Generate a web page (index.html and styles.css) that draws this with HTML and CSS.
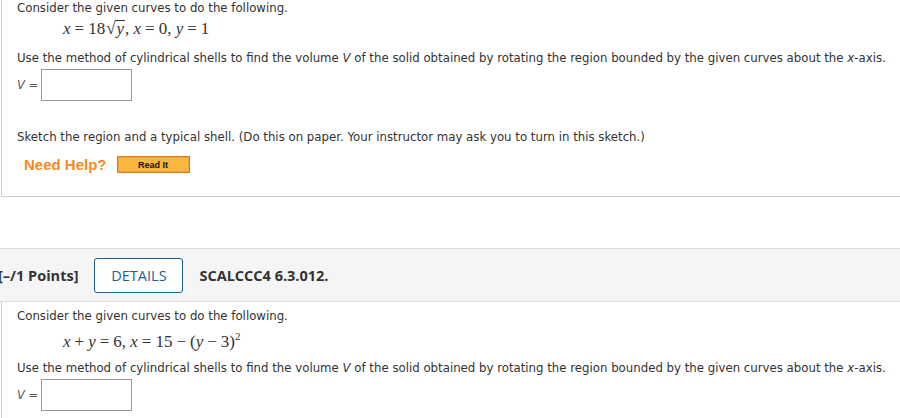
FILE: index.html
```html
<!DOCTYPE html>
<html>
<head>
<meta charset="utf-8">
<link rel="stylesheet" href="styles.css">
</head>
<body>
<div class="panel panel-top">
  <p class="line first">Consider the given curves to do the following.</p>
  <p class="math m1"><i>x</i><span class="op">=</span>18<span class="sqrt"><span class="rad">√</span><span class="under"><i>y</i></span></span>, <i>x</i><span class="op">=</span>0, <i>y</i><span class="op">=</span>1</p>
  <p class="line">Use the method of cylindrical shells to find the volume <i>V</i> of the solid obtained by rotating the region bounded by the given curves about the <i>x</i>-axis.</p>
  <div class="answer"><span class="vlabel"><i>V</i> =</span><span class="input"></span></div>
  <p class="line sketch">Sketch the region and a typical shell. (Do this on paper. Your instructor may ask you to turn in this sketch.)</p>
  <div class="help"><span class="need">Need Help?</span><span class="readit">Read It</span></div>
</div>
<div class="qhead">
  <span class="points">[–/1 Points]</span>
  <span class="details">DETAILS</span>
  <span class="code">SCALCCC4 6.3.012.</span>
</div>
<div class="panel panel-bottom">
  <p class="line first">Consider the given curves to do the following.</p>
  <p class="math m2"><i>x</i><span class="op">+</span><i>y</i><span class="op">=</span>6, <i>x</i><span class="op">=</span>15<span class="op">−</span>(<i>y</i><span class="op">−</span>3)<sup>2</sup></p>
  <p class="line">Use the method of cylindrical shells to find the volume <i>V</i> of the solid obtained by rotating the region bounded by the given curves about the <i>x</i>-axis.</p>
  <div class="answer"><span class="vlabel"><i>V</i> =</span><span class="input"></span></div>
</div>
</body>
</html>
```
FILE: styles.css
```css
html, body {
  margin: 0;
  padding: 0;
  background: #fff;
}
body {
  width: 900px;
  height: 418px;
  overflow: hidden;
  font-family: "DejaVu Sans", Verdana, sans-serif;
  font-size: 11.75px;
  color: #333;
}
p { margin: 0; }
.panel {
  margin-left: 1px;
  border-left: 1px solid #ccc;
  padding-left: 15px;
}
.panel-top {
  border-bottom: 1px solid #ccc;
  padding-bottom: 23px;
}
.line {
  line-height: 16px;
  white-space: nowrap;
}
.line i { font-style: italic; }
.math {
  font-family: "Liberation Serif", "Times New Roman", serif;
  font-size: 17px;
  color: #333;
  padding-left: 46px;
  line-height: 20px;
  white-space: nowrap;
}
.op { padding: 0 4px; }
.m1 { margin-top: 3px; margin-bottom: 11px; }
.m2 { margin-top: 8px; margin-bottom: 8px; }
.math i { font-style: italic; }
.math sup { font-size: 11px; vertical-align: 7px; line-height: 0; }
.sqrt { display: inline-block; margin-left: 1px; }
.rad { font-style: normal; }
.under {
  border-top: 1px solid #333;
  padding: 0 1px;
  line-height: 16px;
  display: inline-block;
}
.answer {
  display: flex;
  align-items: center;
  margin-top: 3px;
}
.vlabel {
  width: 24px;
  font-size: 11.5px;
  color: #555;
}
.vlabel i { font-style: italic; }
.input {
  width: 89px;
  height: 30px;
  border: 1px solid #999;
  background: #fff;
}
.sketch { margin-top: 28px; }
.help {
  display: flex;
  align-items: center;
  margin-top: 11px;
  padding-left: 7px;
  gap: 10px;
}
.need {
  font-family: "Liberation Sans", Arial, sans-serif;
  font-weight: bold;
  font-size: 15px;
  color: #f48a1f;
}
.readit {
  box-sizing: border-box;
  width: 73px;
  height: 17px;
  border: 1px solid #d97c1c;
  background: #fbb740;
  box-shadow: inset 0 0 0 1px #f0a13a;
  font-family: "Liberation Sans", Arial, sans-serif;
  font-weight: bold;
  font-size: 9px;
  color: #111;
  display: flex;
  align-items: center;
  justify-content: center;
}
.qhead {
  margin-top: 51px;
  height: 52px;
  background: #f5f5f5;
  border-top: 1px solid #ddd;
  border-bottom: 1px solid #ddd;
  display: flex;
  align-items: center;
  font-family: "Open Sans", sans-serif;
  font-size: 14.5px;
  color: #333;
}
.points {
  font-weight: bold;
  margin-left: -2px;
}
.details {
  margin-left: 16px;
  box-sizing: border-box;
  width: 89px;
  height: 35px;
  border: 1px solid #1f5f8f;
  border-radius: 3px;
  background: #fff;
  color: #1f5f8f;
  display: flex;
  align-items: center;
  justify-content: center;
}
.code {
  font-weight: bold;
  margin-left: 16px;
}
.panel-bottom {
  padding-top: 6px;
  padding-bottom: 20px;
}
```
